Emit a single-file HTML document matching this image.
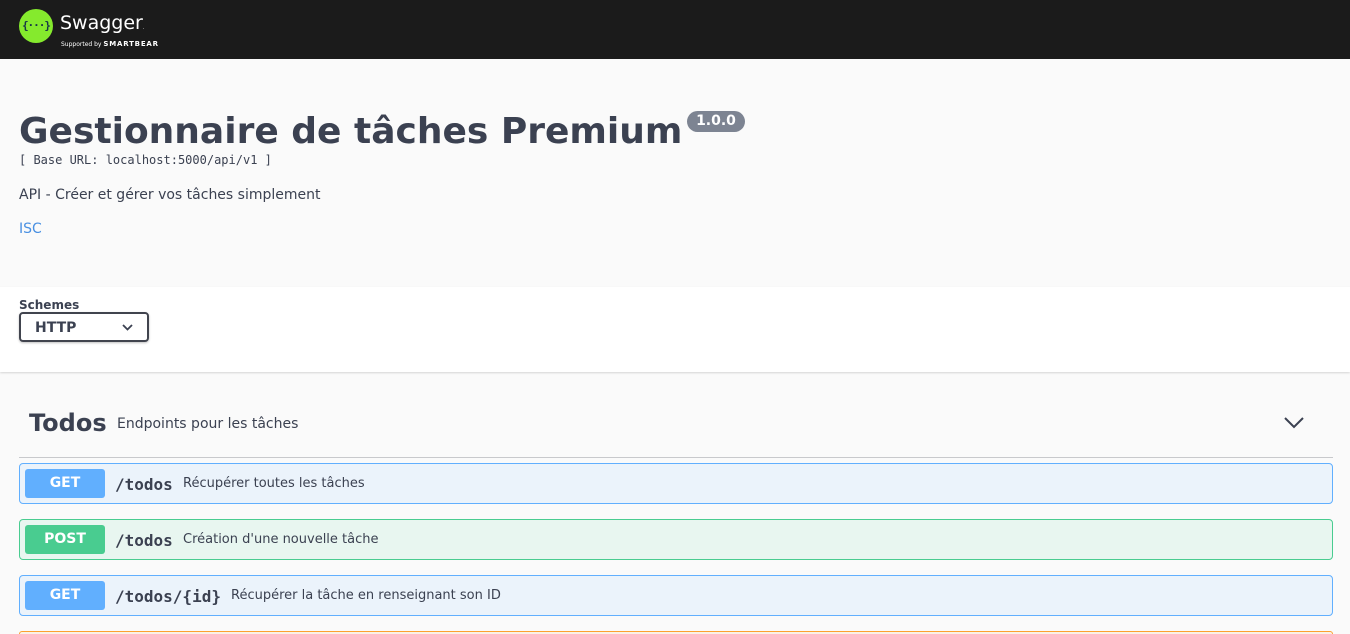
<!DOCTYPE html>
<html><head><meta charset="utf-8"><style>
*{box-sizing:border-box;margin:0;padding:0}
html,body{width:1350px;height:634px;overflow:hidden}
body{background:#fafafa;font-family:"DejaVu Sans",sans-serif;color:#3b4151;position:relative}
.top{height:59px;background:#1b1b1b;position:relative}
.logo{position:absolute;left:19px;top:9px;width:34px;height:34px;border-radius:50%;background:#85ea2d;color:#173647;font:bold 11px "DejaVu Sans Mono",monospace;text-align:center;line-height:33px;letter-spacing:-1px}
.sw{position:absolute;left:60px;top:12px;color:#fff;font-size:19px}
.sb{position:absolute;left:61px;top:40px;color:#fff;font-size:6px}
.sb b{font-size:7px;letter-spacing:.8px}
h1{position:absolute;left:19px;top:111px;font-size:36px;font-weight:bold;color:#3b4151}
.ver{position:absolute;left:687px;top:111px;width:58px;height:21px;border-radius:57px;background:#7d8492;color:#fff;font-size:14px;font-weight:bold;text-align:center;line-height:21px}
.base{position:absolute;left:19px;top:153px;font:12px "DejaVu Sans Mono",monospace;color:#3b4151}
.desc{position:absolute;left:19px;top:187px;font-size:14px}
.isc{position:absolute;left:19px;top:221px;font-size:14px;color:#4990e2}
.sch{position:absolute;left:0;top:287px;width:1350px;height:85px;background:#fff;box-shadow:0 1px 2px rgba(0,0,0,.15)}
.sch .l{position:absolute;left:19px;top:11px;font-size:12px;font-weight:bold}
.sel{position:absolute;left:19px;top:25px;width:130px;height:30px;border:2px solid #41444e;border-radius:4px;box-shadow:0 1px 2px rgba(0,0,0,.25);font-size:14px;font-weight:bold;padding:6px 14px}
.sel svg{position:absolute;right:14px;top:10px}
.tag{position:absolute;left:19px;top:400px;width:1314px;height:58px;border-bottom:1px solid #c8c9cc}
.tag .n{position:absolute;left:10px;top:9px;font-size:24px;font-weight:bold}
.tag .d{position:absolute;left:98px;top:16px;font-size:14px}
.tag svg{position:absolute;right:29px;top:17px}
.op{position:absolute;left:19px;width:1314px;height:41px;border:1px solid;border-radius:4px}
.op .m{position:absolute;left:5px;top:5px;width:80px;height:29px;border-radius:3px;color:#fff;font-size:14px;font-weight:bold;text-align:center;line-height:29px}
.op .p{position:absolute;left:95px;top:11px;font:bold 16px "DejaVu Sans Mono",monospace;color:#3b4151}
.op .t{position:absolute;top:12px;font-size:13px}
.g{background:#ebf3fb;border-color:#61affe}.g .m{background:#61affe}
.po{background:#e8f6f0;border-color:#49cc90}.po .m{background:#49cc90}
</style></head><body>
<div class="top"><div class="logo">{···}</div><div class="sw">Swagger<span style="font-size:5px">.</span></div><div class="sb">Supported by <b>SMARTBEAR</b></div></div>
<h1>Gestionnaire de tâches Premium</h1><div class="ver">1.0.0</div>
<div class="base">[ Base URL: localhost:5000/api/v1 ]</div>
<div class="desc">API - Créer et gérer vos tâches simplement</div>
<div class="isc">ISC</div>
<div class="sch"><div class="l">Schemes</div><div class="sel">HTTP<svg width="11" height="7" viewBox="0 0 11 7"><path d="M1 1l4.5 4.5L10 1" stroke="#3b4151" stroke-width="1.8" fill="none"/></svg></div></div>
<div class="tag"><span class="n">Todos</span><span class="d">Endpoints pour les tâches</span><svg width="20" height="12" viewBox="0 0 20 12"><path d="M1 1l9 9 9-9" stroke="#3b4151" stroke-width="2" fill="none"/></svg></div>
<div class="op g" style="top:463px"><div class="m">GET</div><div class="p">/todos</div><div class="t" style="left:163px">Récupérer toutes les tâches</div></div>
<div class="op po" style="top:519px"><div class="m">POST</div><div class="p">/todos</div><div class="t" style="left:163px">Création d'une nouvelle tâche</div></div>
<div class="op g" style="top:575px"><div class="m">GET</div><div class="p">/todos/{id}</div><div class="t" style="left:211px">Récupérer la tâche en renseignant son ID</div></div>
<div class="op" style="top:631px;height:3px;border-bottom:0;border-radius:4px 4px 0 0;background:#fbf1e6;border-color:#fca130"></div>
</body></html>
